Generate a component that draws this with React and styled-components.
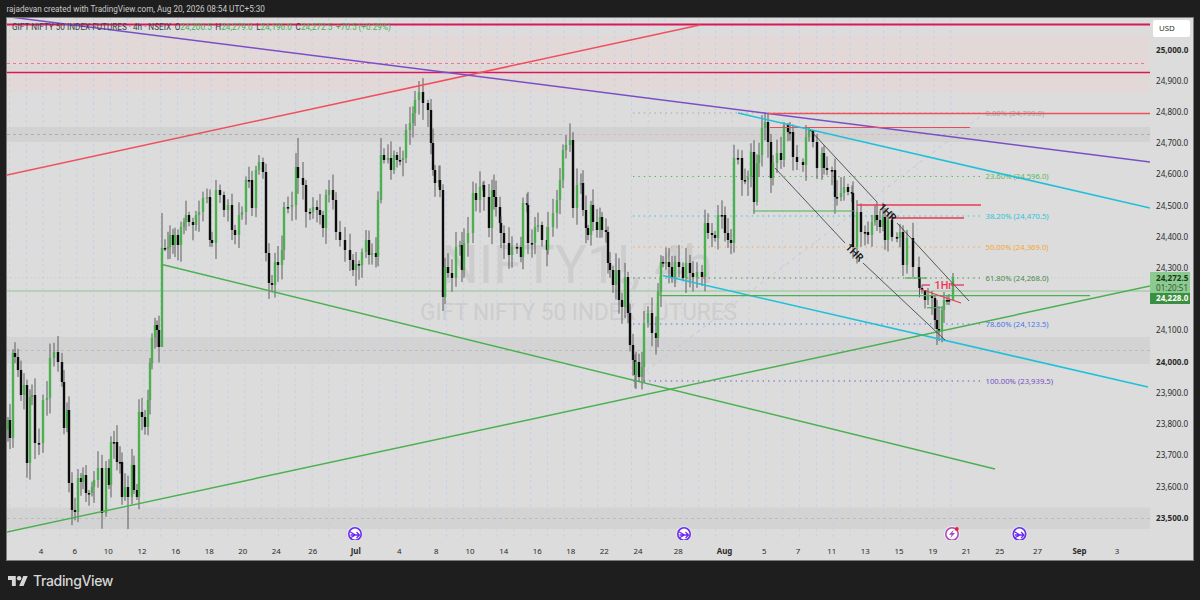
import React from 'react';
import styled, { createGlobalStyle } from 'styled-components';

const GlobalStyle = createGlobalStyle`
  html, body {
    margin: 0;
    padding: 0;
    background: #1e1e1e;
  }
  body {
    font-family: "Noto Sans", "Liberation Sans", sans-serif;
    overflow: hidden;
  }
`;

const Page = styled.div`
  width: 1200px;
  height: 600px;
  display: flex;
  flex-direction: column;
  background: #1e1e1e;
`;

const Header = styled.div`
  height: 17px;
  padding-left: 6.5px;
  display: flex;
  align-items: center;
  color: #c9c9c9;
  font-family: "Roboto", sans-serif;
  font-size: 8.2px;
`;

const Frame = styled.div`
  position: relative;
  height: 542px;
  margin: 0 6px;
  display: flex;
  background: #dcdcdc;
  border: 1px solid #7c7c7c;
`;

const PlotColumn = styled.div`
  width: 1143px;
  display: flex;
  flex-direction: column;
`;

const TimeAxis = styled.div`
  height: 20px;
  display: flex;
  padding-top: 6px;
  box-sizing: border-box;
`;

const TimeTick = styled.span`
  flex: none;
  text-align: center;
  font-size: 7.9px;
  line-height: 11px;
  color: #2a2a2a;
  font-weight: ${p => (p.$major ? 700 : 400)};
`;

const PriceAxis = styled.div`
  position: relative;
  flex: 1;
  padding: 25.5px 0 0 6px;
`;

const PriceTick = styled.div`
  height: 31.23px;
  line-height: 11px;
  font-size: 8.1px;
  color: #2a2a2a;
  font-weight: ${p => (p.$major ? 700 : 400)};
`;

const UsdButton = styled.div`
  position: absolute;
  top: 2px;
  left: 3px;
  width: 37px;
  height: 17px;
  line-height: 17px;
  padding-left: 6px;
  box-sizing: border-box;
  background: #fff;
  border-radius: 2px;
  font-size: 7.9px;
  color: #333;
`;

const PriceTags = styled.div`
  position: absolute;
  top: 254px;
  left: 0;
  width: 40px;
`;

const LiveTag = styled.div`
  height: 21px;
  padding: 1px 0 0 6px;
  box-sizing: border-box;
  background: #8ccb90;
  color: #1d3a20;
  font-size: 8.1px;
  line-height: 9.5px;
  b { font-weight: 700; }
  span { color: #35563a; }
`;

const LevelTag = styled.div`
  height: 10.5px;
  padding-left: 6px;
  background: #3a8f40;
  color: #fff;
  font-size: 8.1px;
  line-height: 10.5px;
  font-weight: 700;
`;

const Legend = styled.div`
  position: absolute;
  top: 4px;
  left: 5px;
  display: flex;
  gap: 3.6px;
  font-family: "Roboto", sans-serif;
  font-size: 8.2px;
  line-height: 11px;
  color: #3f3f3f;
  white-space: nowrap;
`;

const LegendValue = styled.span`
  color: #4caf50;
`;

const Footer = styled.div`
  flex: 1;
  display: flex;
  align-items: center;
  gap: 5px;
  padding: 0 0 0 8px;
  color: #d6d6d6;
`;

const Wordmark = styled.span`
  font-family: "Inter", "Noto Sans", sans-serif;
  font-size: 14px;
  font-weight: 500;
  letter-spacing: -0.35px;
`;

const Chart = styled.svg`
  display: block;
  width: 1143px;
  height: 522px;
`;

const FibLabel = styled.text`
  font-family: "Noto Sans", sans-serif;
  font-size: 7.7px;
`;

const Watermark = styled.text`
  font-family: "Roboto", sans-serif;
  fill: #cdcdcd;
`;

const DrawingLabel = styled.text`
  font-family: "Noto Sans", sans-serif;
  font-size: 10.5px;
  font-weight: 600;
  fill: #151515;
  text-anchor: middle;
  dominant-baseline: middle;
`;

const HourLabel = styled.text`
  font-family: "Roboto", sans-serif;
  font-size: 10.8px;
  font-weight: 500;
  fill: #ec3a52;
`;

const priceTicks = [
  ['25,000.0', true], ['24,900.0'], ['24,800.0'], ['24,700.0'], ['24,600.0'], ['24,500.0'],
  ['24,400.0'], ['24,300.0'], ['24,200.0'], ['24,100.0'], ['24,000.0', true], ['23,900.0'],
  ['23,800.0'], ['23,700.0'], ['23,600.0'], ['23,500.0', true],
];

const timeTicks = [
  ['4', 41], ['6', 75], ['10', 108], ['12', 142], ['16', 176], ['18', 209], ['20', 243], ['24', 276],
  ['26', 310], ['Jul', 355, true], ['4', 403], ['8', 436], ['10', 470], ['14', 504], ['16', 537],
  ['18', 571], ['22', 604], ['24', 638], ['28', 672], ['Aug', 731, true], ['5', 764], ['7', 798],
  ['11', 832], ['13', 865], ['15', 899], ['19', 933], ['21', 966], ['25', 1000], ['27', 1033],
  ['Sep', 1084, true], ['3', 1117],
];

// cell widths so every label is centred on its x, frame starts at 7
const timeCells = timeTicks.map(([label, x, major], i) => {
  const prev = i === 0 ? 7 : (timeTicks[i - 1][1] + x) / 2;
  const next = i === timeTicks.length - 1 ? x + (x - prev) : (x + timeTicks[i + 1][1]) / 2;
  const start = i === 0 ? x - (next - x) : prev;
  return { label, major, width: next - start, lead: i === 0 ? start - 7 : 0 };
});

const fibLevels = [
  { y: 113, color: '#a3a3a3', text: '0.00% (24,799.0)' },
  { y: 176.5, color: '#5cb85f', text: '23.60% (24,596.0)' },
  { y: 216, color: '#2cc3d6', text: '38.20% (24,470.5)' },
  { y: 247, color: '#f5a62e', text: '50.00% (24,369.0)' },
  { y: 278, color: '#4a8a4e', text: '61.80% (24,268.0)' },
  { y: 324, color: '#4a76e8', text: '78.60% (24,123.5)' },
  { y: 381, color: '#7650c4', text: '100.00% (23,939.5)' },
];

// [x, close] read off the picture, optional third/fourth value pin the high and low
const closes = [
  [8,420],[10,438],[13,353],[15,357],[18,370],[21,395],[24,385],[27,463],[30,397],[32,395],[35,443],[39,443],
  [43,400],[47,398],[50,358],[54,352],[58,362],[62,382],[64,428],[67,410],[69,483],[72,510],[75,512],[78,478],
  [81,482],[83,475],[86,493],[89,493],[92,487],[94,480],[98,468],[102,513],[106,468],[109,485],[111,442],[114,442],
  [117,462],[120,462],[122,497],[125,487],[128,497,null,529],[132,465],[134,490],[137,497],[139,412],[142,417],[145,427],[148,400],
  [150,363],[152,338],[155,325],[157,330],[159,347],
  [162,248,213,292],[165,248],[168,247],[170,235],[173,245],[175,235],[178,245],[181,227],[184,222],[186,215],[189,222],
  [193,225],[196,215],[199,212],[203,198],[207,197],[210,240],[212,243],[216,190],[220,195],[224,210],[228,205],[232,230],
  [235,235],[239,215],[242,212],[246,180],[249,180],[252,208],[256,170],[259,162],[263,172],[266,253],[269,283],[272,285],
  [275,262],[278,265],[282,250],[284,207],[288,207],[292,205],[296,167],[298,178,138],[303,185],[306,212],[310,212],[313,207],
  [317,210],[320,215],[323,228],[326,195],[329,190],[333,200],[336,232],[340,240],[345,250],[350,260],[353,270],[356,264],
  [359,265],[362,252],[366,240],[369,255],[372,253],[376,257],[378,200],[381,155],[384,160],[388,158],[391,170],[394,155],
  [397,160],[400,160],[403,158],[406,130],[410,123],[413,113],[415,100],[419,92,81],[423,103],[428,110],[431,143],[433,170],
  [435,183],[439,180],[440,190],[443,297],[445,267],[448,273],[452,278],[456,247],[460,245],[462,270],[464,243],[468,233],
  [473,193],[476,200],[480,187],[483,185],[484,197],[489,228],[492,190],[494,197],[496,207],[500,223],[501,233],[504,243],
  [509,255],[512,247],[517,247],[521,257],[523,203],[527,205],[528,243],[532,243],[535,227],[538,225],[542,240],[547,250],
  [548,227],[553,213],[557,200],[560,180],[563,150],[566,145,135],[570,140],[573,208],[577,185],[581,183],[583,210],[586,228],
  [588,235],[591,205],[593,222],[597,230],[600,217],[602,230],[606,232],[608,263],[610,270],[613,285],[616,270],[619,300],
  [622,307],[625,277],[628,313],[630,345],[633,360],[635,375],[636,362],[639,377,null,381],[642,367],[644,323],[648,313],[652,333],
  [656,338],[658,292],[661,262],[663,263],[666,262],[669,267],[672,277],[675,262],[679,267],[683,278],[686,263],[690,273],
  [693,277],[697,272],[702,277],[705,223],[708,233],[712,235],[715,238],[718,215],[722,215],[725,233],[728,240],[731,243],
  [734,158],[738,158],[742,180],[745,180],[748,177],[751,152],[754,202],[757,163],[759,155],[762,128],[765,122],[768,142,113],
  [771,178],[773,163],[777,153],[781,160],[784,125,122],[788,132,123],[790,132,122],[793,157],[797,162],[803,165],[806,137,125],[809,130,127],
  [813,142,130],[817,168],[822,153],[824,168],[827,170],[832,170],[835,197],[837,197],[841,193],[844,187],[848,192],[852,193],
  [853,247],[857,212],[861,232],[865,232],[868,235],[872,222],[875,215],[877,220,202],[880,227],[883,217],[885,240],[888,220],
  [892,237],[897,238],[900,232],[903,265],[907,238],[913,267],[919,277],[919.5,288,284],[922,290,285],[925,300,290],[928,295,288],[932,298,291],
  [935,320,296],[937,329,300],[939,330,306,341],[942,310,306],[944,300,292],[947,300,295],[949,300,294],[953,277,273,300],
];

// small repeatable noise for the wicks
const noise = i => {
  const v = Math.sin(i * 12.9898) * 43758.5453;
  return v - Math.floor(v);
};

const candles = closes.map(([x, close, high, low], i) => {
  const open = i === 0 ? close + 10 : closes[i - 1][1];
  const top = Math.min(open, close);
  const bottom = Math.max(open, close);
  return {
    x,
    up: close < open,
    top,
    height: Math.max(bottom - top, 1.6),
    high: high ?? top - 3 - noise(i) * 14,
    low: low ?? bottom + 3 + noise(i + 500) * 14,
  };
});

const gridXs = Array.from({ length: 57 }, (_, i) => 9.5 + i * 16.81);

const EventIcon = ({ x, y = 534 }) => (
  <g transform={`translate(${x} ${y})`}>
    <circle r="8" fill="#e4e4e4" />
    <circle r="6.2" fill="#fff" stroke="#6a2bf0" strokeWidth="1.6" />
    <path d="M-5 -2.2 L0.5 1 L-5 4 M-4.5 1 H4 M1.5 -2 L4.5 1 L1.5 4" fill="none" stroke="#6a2bf0" strokeWidth="1.3" />
  </g>
);

const FlashIcon = ({ x, y = 534 }) => (
  <g transform={`translate(${x} ${y})`}>
    <circle r="8" fill="#ececec" />
    <circle r="6.2" fill="#fff" stroke="#ab47bc" strokeWidth="1.5" />
    <path d="M1.6 -4.2 L-3 0.8 H-0.4 L-1.8 4.2 L3 -1 H0.4 Z" fill="#ab47bc" />
    <circle cx="4.8" cy="-5" r="1.9" fill="#f02030" />
  </g>
);

const TvLogo = () => (
  <svg width="20" height="10" viewBox="0 4 36 18" fill="currentColor">
    <path d="M14 22H7V11H0V4h14v18zM28 22h-8l7.5-18h8L28 22z" />
    <circle cx="20" cy="8" r="4" />
  </svg>
);

const PriceChart = () => (
  <Chart viewBox="7 18 1143 522">
    {/* zones */}
    <rect x="7" y="35" width="1143" height="57.5" fill="#e3d8d8" />
    <rect x="7" y="127" width="1143" height="15" fill="#d2d2d2" />
    <rect x="7" y="337" width="1143" height="27" fill="#d3d3d3" />
    <rect x="7" y="507.5" width="1143" height="21.5" fill="#d3d3d3" />

    {gridXs.map(x => (
      <line key={x} x1={x} x2={x} y1="18" y2="540" stroke="#c3d3e6" strokeDasharray="3 3" />
    ))}

    <line x1="7" x2="1146" y1="63.5" y2="63.5" stroke="#ec7a8c" strokeDasharray="3 3" />
    <line x1="7" x2="1150" y1="134.5" y2="134.5" stroke="#aeaeae" strokeDasharray="3 3" />
    <line x1="565" x2="930" y1="134.5" y2="134.5" stroke="#e6b3b3" strokeDasharray="3 3" />
    <line x1="7" x2="1150" y1="350.5" y2="350.5" stroke="#bdbdbd" strokeDasharray="3 3" />
    <line x1="7" x2="1150" y1="518.5" y2="518.5" stroke="#bdbdbd" strokeDasharray="3 3" />

    <Watermark x="441" y="283" fontSize="53" textLength="272" lengthAdjust="spacingAndGlyphs">NIFTY1!, 4h</Watermark>
    <Watermark x="420" y="319.5" fontSize="23.5" textLength="317" lengthAdjust="spacingAndGlyphs">GIFT NIFTY 50 INDEX FUTURES</Watermark>

    <line x1="7" x2="1150" y1="291" y2="291" stroke="#a9cdab" strokeWidth="1.4" />
    <line x1="7" x2="1150" y1="277.7" y2="277.7" stroke="#b9d6bb" strokeDasharray="1 3" />

    <line x1="633" y1="381" x2="985" y2="113" stroke="#c6c6d4" strokeDasharray="4 4" />
    {fibLevels.map(f => (
      <g key={f.text}>
        <line x1="633" x2="980" y1={f.y} y2={f.y} stroke={f.color} strokeWidth="1.1" strokeDasharray="1.4 4" />
        <FibLabel x="985.5" y={f.y + 2.6} fill={f.color}>{f.text}</FibLabel>
      </g>
    ))}

    {candles.map(c => (
      <g key={c.x}>
        <line x1={c.x} x2={c.x} y1={c.high} y2={c.low} stroke="#5c5c5c" strokeWidth="1" />
        <rect x={c.x - 1.2} y={c.top} width="2.4" height={c.height} fill={c.up ? '#4caf50' : '#0c0c0c'} />
      </g>
    ))}

    {/* drawings */}
    <line x1="7" x2="1150" y1="24.5" y2="24.5" stroke="#d6185e" strokeWidth="1.8" />
    <line x1="7" x2="1150" y1="72.5" y2="72.5" stroke="#d6185e" strokeWidth="1.5" />
    <line x1="7" y1="175" x2="700" y2="25" stroke="#f0505e" strokeWidth="1.5" />
    <line x1="10" y1="17" x2="1150" y2="162" stroke="#7a4fc6" strokeWidth="1.5" />
    <line x1="768" x2="1150" y1="113.5" y2="113.5" stroke="#f0505e" strokeWidth="1.6" />
    <line x1="770" x2="970" y1="127.5" y2="127.5" stroke="#ec4a5a" strokeWidth="1.2" />
    <line x1="857" x2="981" y1="205" y2="205" stroke="#ec3a52" strokeWidth="1.4" />
    <line x1="890" x2="964" y1="218" y2="218" stroke="#ec3a52" strokeWidth="1.4" />

    <line x1="738" y1="113" x2="1150" y2="208" stroke="#1fc0d8" strokeWidth="1.6" />
    <line x1="663" y1="275.5" x2="1148" y2="387" stroke="#1fc0d8" strokeWidth="1.6" />

    <line x1="162" y1="264.5" x2="995" y2="469" stroke="#4caf50" strokeWidth="1.4" />
    <line x1="7" y1="532" x2="1150" y2="286" stroke="#4caf50" strokeWidth="1.4" />
    <line x1="660" x2="1090" y1="295.7" y2="295.7" stroke="#4caf50" strokeWidth="1.3" />
    <line x1="753" x2="855" y1="211" y2="211" stroke="#4caf50" strokeWidth="1.2" />
    <line x1="905" x2="927" y1="278" y2="278" stroke="#4caf50" strokeWidth="1.2" />
    <line x1="927" x2="942" y1="307.7" y2="307.7" stroke="#4caf50" strokeWidth="1.2" />
    <line x1="660" x2="660" y1="276" y2="296" stroke="#4caf50" strokeWidth="1" />

    <line x1="775" y1="168" x2="845" y2="243" stroke="#333" strokeWidth="0.8" />
    <line x1="863" y1="263" x2="945" y2="340" stroke="#333" strokeWidth="0.8" />
    <line x1="810" y1="130" x2="877" y2="202" stroke="#333" strokeWidth="0.8" />
    <line x1="897" y1="223" x2="969" y2="301" stroke="#333" strokeWidth="0.8" />
    <DrawingLabel x="854" y="253" transform="rotate(45 854 253)">1HR</DrawingLabel>
    <DrawingLabel x="887" y="213" transform="rotate(45 887 213)">1HR</DrawingLabel>

    <line x1="920" y1="289" x2="961" y2="303" stroke="#ec3a52" strokeWidth="1.3" />
    <line x1="922" x2="930" y1="285" y2="285" stroke="#e0245e" strokeWidth="1.2" />
    <line x1="951" x2="964" y1="285" y2="285" stroke="#e0245e" strokeWidth="1.2" />
    <HourLabel x="934.5" y="289">1Hr</HourLabel>

    <EventIcon x={355} />
    <EventIcon x={684} />
    <FlashIcon x={952} />
    <EventIcon x={1019.5} />
  </Chart>
);

export default function App() {
  return (
    <Page>
      <GlobalStyle />
      <Header>rajadevan created with TradingView.com, Aug 20, 2026 08:54 UTC+5:30</Header>
      <Frame>
        <PlotColumn>
          <PriceChart />
          <TimeAxis>
            {timeCells.map((t, i) => (
              <TimeTick key={i} $major={t.major} style={{ width: t.width, marginLeft: t.lead }}>
                {t.label}
              </TimeTick>
            ))}
          </TimeAxis>
        </PlotColumn>
        <PriceAxis>
          {priceTicks.map(([label, major]) => (
            <PriceTick key={label} $major={major}>{label}</PriceTick>
          ))}
          <UsdButton>USD</UsdButton>
          <PriceTags>
            <LiveTag>
              <b>24,272.5</b>
              <br />
              <span>01:20:51</span>
            </LiveTag>
            <LevelTag>24,228.0</LevelTag>
          </PriceTags>
        </PriceAxis>
        <Legend>
          <span>GIFT NIFTY 50 INDEX FUTURES · 4h · NSEIX</span>
          <span>O<LegendValue>24,200.5</LegendValue></span>
          <span>H<LegendValue>24,279.0</LegendValue></span>
          <span>L<LegendValue>24,196.0</LegendValue></span>
          <span>C<LegendValue>24,272.5</LegendValue></span>
          <LegendValue>+70.5 (+0.29%)</LegendValue>
        </Legend>
      </Frame>
      <Footer>
        <TvLogo />
        <Wordmark>TradingView</Wordmark>
      </Footer>
    </Page>
  );
}
